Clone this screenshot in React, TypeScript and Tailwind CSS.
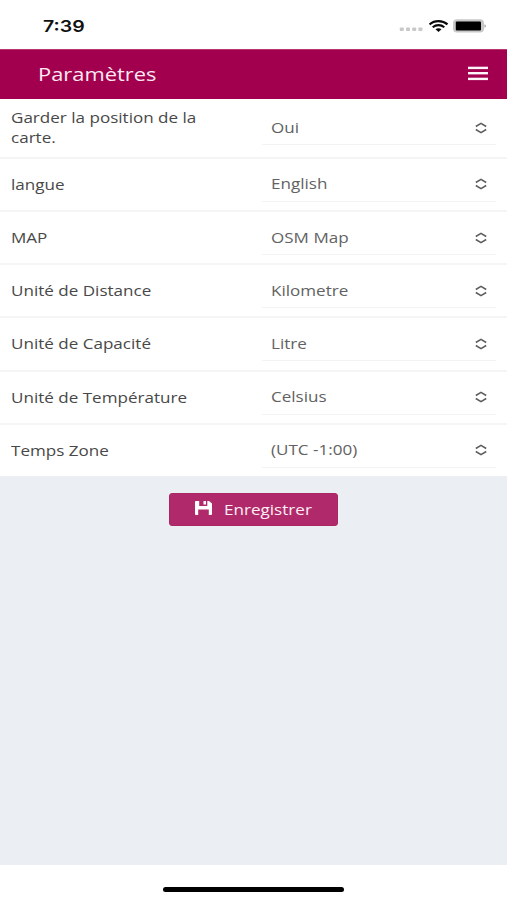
import React from 'react';

interface Setting {
  label: string;
  value: string;
}

const settings: Setting[] = [
  { label: 'Garder la position de la carte.', value: 'Oui' },
  { label: 'langue', value: 'English' },
  { label: 'MAP', value: 'OSM Map' },
  { label: 'Unité de Distance', value: 'Kilometre' },
  { label: 'Unité de Capacité', value: 'Litre' },
  { label: 'Unité de Température', value: 'Celsius' },
  { label: 'Temps Zone', value: '(UTC -1:00)' },
];

const StatusBar: React.FC = () => (
  <div className="flex h-[49px] shrink-0 items-center justify-between bg-white pr-5 pl-[43px]">
    <span className="mt-[3px] inline-block origin-left scale-x-[1.22] font-['Inter'] text-[16px] leading-5 font-semibold text-[#111]">7:39</span>
    <div className="mt-[2px] flex items-center">
      <svg width="24" height="5" viewBox="0 0 24 5" fill="#c9c9c9" className="mt-[8px] mr-[6px]">
        <rect x="0.8" y="0.5" width="4" height="3.6" rx="0.8" />
        <rect x="7" y="0.5" width="4" height="3.6" rx="0.8" />
        <rect x="13.2" y="0.5" width="4" height="3.6" rx="0.8" />
        <rect x="19.4" y="0.5" width="4" height="3.6" rx="0.8" />
      </svg>
      <svg width="20" height="12" viewBox="0 0 20 12" fill="none" stroke="#0a0a0a" strokeWidth="2.1" className="mr-[4px]">
        <path d="M0.5 4.4C5.5 0 13.5 0 18.5 4.4" />
        <path d="M3.7 7.3C7.1 4.4 11.9 4.4 15.3 7.3" />
        <path d="M6.5 9.3C8.3 7.9 10.7 7.9 12.5 9.3L9.5 12Z" fill="#0a0a0a" stroke="none" />
      </svg>
      <svg width="34" height="14" viewBox="0 0 34 14">
        <rect x="0" y="0.3" width="31" height="13.2" rx="4" fill="#c8c8c8" />
        <rect x="2.8" y="2.5" width="25.2" height="9" rx="1" fill="#000" />
        <path d="M31.5 5.2c1.8.6 1.8 3 0 3.6z" fill="#999" />
      </svg>
    </div>
  </div>
);

const Header: React.FC = () => (
  <header className="flex h-[50px] shrink-0 items-center justify-between border-t border-[#b8356f] bg-[#a2004f] pr-[19px] pl-[38px]">
    <h1 className="mb-[2px] origin-left scale-x-[1.215] text-[18px] leading-6 text-[#fbe9f2]">Paramètres</h1>
    <button className="mb-[3px]" aria-label="Menu">
      <svg width="20" height="15" viewBox="0 0 20 15" fill="#fff4fa">
        <rect y="0.7" width="20" height="2.4" />
        <rect y="6" width="20" height="2.4" />
        <rect y="11.7" width="20" height="2.4" />
      </svg>
    </button>
  </header>
);

const SettingRow: React.FC<{ setting: Setting }> = ({ setting }) => (
  <div className="flex h-[53.2px] shrink-0 items-center border-b-2 border-[#f5f5f6] bg-white pt-px pr-[11px] pl-[11px] first:h-[59.8px] last:h-[51.2px] last:border-b-0">
    <div className="w-[250.5px] shrink-0">
      <span className="block w-[170px] origin-left scale-x-[1.218] text-[14px] leading-5 text-[#484848]">{setting.label}</span>
    </div>
    <div className="flex h-[34px] flex-1 items-center justify-between border-b border-[#f3f3f4] pr-[9px] pl-[9px]">
      <span className="origin-left scale-x-[1.218] text-[14px] leading-5 text-[#626262]">{setting.value}</span>
      <svg width="12" height="12" viewBox="0 0 12 12" fill="none" stroke="#5c5c5c" strokeWidth="1.5" strokeLinejoin="round">
        <path d="M0.8 4.5L6 1.3L11.2 4.5" />
        <path d="M0.8 7.5L6 10.7L11.2 7.5" />
      </svg>
    </div>
  </div>
);

export default function App() {
  return (
    <div className="flex h-[900px] w-[507px] flex-col overflow-hidden bg-[#ebeef2] font-['Open_Sans',sans-serif]">
      <StatusBar />
      <Header />
      <div className="flex flex-col">
        {settings.map((s) => (
          <SettingRow key={s.label} setting={s} />
        ))}
      </div>
      <main className="flex flex-1 justify-center pt-[17px]">
        <button className="flex h-[33px] w-[169px] items-center rounded-[3px] border border-[#a92765] bg-[#b02a6b] pl-[25px]">
          <svg width="17" height="14" viewBox="0 0 17 14" fill="#fff" className="mb-[3px] shrink-0">
            <path fillRule="evenodd" d="M1 0H4.2V5H12.3V0H14L17 2.6V13.2Q17 14 16 14H13.8V8.4H3.2V14H1Q0 14 0 13.2V0.8Q0 0 1 0ZM8.5 0H11V3.6H8.5Z" />
          </svg>
          <span className="mt-px ml-3 origin-left scale-x-[1.22] text-[14px] leading-5 text-[#fdeef5]">Enregistrer</span>
        </button>
      </main>
      <footer className="flex h-[35px] shrink-0 justify-center bg-white pt-[22px]">
        <div className="h-[5px] w-[181px] rounded-full bg-black" />
      </footer>
    </div>
  );
}
